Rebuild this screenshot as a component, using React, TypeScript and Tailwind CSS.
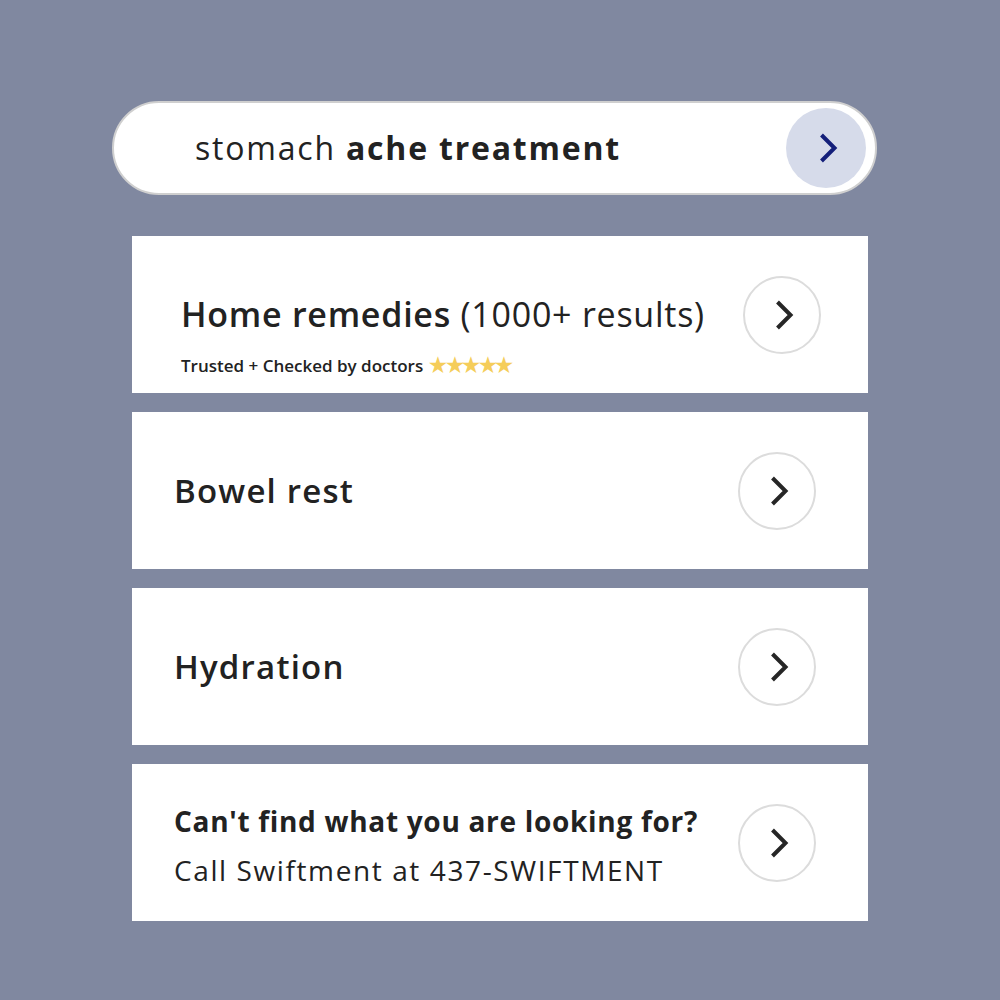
function Chevron({ color }: { color: string }) {
  return (
    <svg width="20" height="32" viewBox="0 0 20 32" fill="none" className="ml-[4px]">
      <path d="M3.5 3 L16.5 16 L3.5 29" stroke={color} strokeWidth="4" strokeLinejoin="miter" />
    </svg>
  );
}

function Arrow() {
  return (
    <div className="w-[78px] h-[78px] rounded-full border-2 border-[#dcdcdc] bg-white flex items-center justify-center shrink-0">
      <Chevron color="#262626" />
    </div>
  );
}

export default function App() {
  return (
    <div
      className="w-[1000px] h-[1000px] bg-[#8088a0] flex flex-col items-center pt-[101px] text-[#222]"
      style={{ fontFamily: "'Open Sans', Lato, sans-serif" }}
    >
      {/* Search bar */}
      <div className="w-[765px] h-[94px] ml-[-11px] rounded-full bg-white border-2 border-[#cfcfcf] flex items-center justify-between pl-[81px] pr-[9px]">
        <div className="text-[32px] leading-none tracking-[1.8px]">
          stomach <span className="font-bold">ache treatment</span>
        </div>
        <div className="w-[80px] h-[80px] rounded-full bg-[#d6dbea] flex items-center justify-center">
          <Chevron color="#141f7a" />
        </div>
      </div>

      {/* Results */}
      <div className="mt-[41px] w-[736px] flex flex-col gap-[19px]">
        <div className="h-[157px] bg-white flex justify-between pl-[49px] pr-[47px]">
          <div className="pt-[61px]">
            <div className="text-[34px] leading-none tracking-[0.75px]">
              <span className="font-semibold">Home remedies</span> (1000+ results)
            </div>
            <div className="mt-[24px] flex items-center gap-[6px] text-[17px] leading-none font-semibold">
              <span>Trusted + Checked by doctors</span>
              <span className="text-[#f5cd5a] text-[20px] tracking-[-1.5px]">★★★★★</span>
            </div>
          </div>
          <div className="self-center">
            <Arrow />
          </div>
        </div>

        <div className="h-[157px] bg-white flex items-center justify-between pl-[42px] pr-[52px]">
          <div className="text-[33px] font-semibold leading-none tracking-[1.2px]">Bowel rest</div>
          <Arrow />
        </div>

        <div className="h-[157px] bg-white flex items-center justify-between pl-[42px] pr-[52px]">
          <div className="text-[33px] font-semibold leading-none tracking-[1.2px]">Hydration</div>
          <Arrow />
        </div>

        <div className="h-[157px] bg-white flex items-center justify-between pl-[42px] pr-[52px]">
          <div className="text-[28px] leading-none pt-[5px]">
            <div className="font-bold tracking-[0.7px]">Can't find what you are looking for?</div>
            <div className="mt-[21px] tracking-[1.6px]">Call Swiftment at 437-SWIFTMENT</div>
          </div>
          <Arrow />
        </div>
      </div>
    </div>
  );
}
